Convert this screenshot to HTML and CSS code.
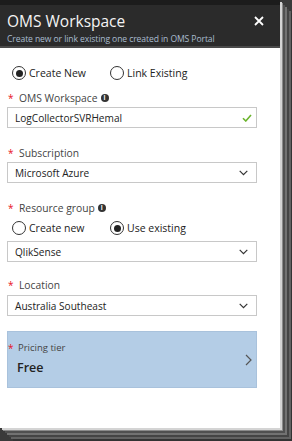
FILE: index.html
```html
<!DOCTYPE html>
<html lang="en">
<head>
  <meta charset="UTF-8" />
  <title>OMS Workspace</title>
  <link rel="stylesheet" href="styles.css">
</head>
<body>
  <div class="blade">
    <div class="header">
      <div class="titles">
        <div class="title">OMS Workspace</div>
        <div class="subtitle">Create new or link existing one created in OMS Portal</div>
      </div>
      <svg class="close" width="10" height="10" viewBox="0 0 10 10">
        <path d="M1 1L9 9M9 1L1 9" stroke="#fff" stroke-width="1.8"/>
      </svg>
    </div>

    <div class="content">
      <div class="radios first">
        <label class="radio"><span class="dot on"></span>Create New</label>
        <label class="radio"><span class="dot"></span>Link Existing</label>
      </div>

      <div class="label gap-a"><span class="req">*</span>OMS Workspace<span class="info">i</span></div>
      <div class="box">
        <span>LogCollectorSVRHemal</span>
        <svg width="10" height="8" viewBox="0 0 10 8">
          <path d="M1 4.2L3.8 7L9 1" fill="none" stroke="#6bb42d" stroke-width="1.6"/>
        </svg>
      </div>

      <div class="label gap-b"><span class="req">*</span>Subscription</div>
      <div class="box">
        <span>Microsoft Azure</span>
        <svg class="chev" width="9" height="6" viewBox="0 0 9 6">
          <path d="M0.7 0.8L4.5 4.6L8.3 0.8" fill="none" stroke="#333" stroke-width="1.2"/>
        </svg>
      </div>

      <div class="label gap-b"><span class="req">*</span>Resource group<span class="info">i</span></div>
      <div class="radios second">
        <label class="radio"><span class="dot"></span>Create new</label>
        <label class="radio"><span class="dot on"></span>Use existing</label>
      </div>
      <div class="box after-radios">
        <span>QlikSense</span>
        <svg class="chev" width="9" height="6" viewBox="0 0 9 6">
          <path d="M0.7 0.8L4.5 4.6L8.3 0.8" fill="none" stroke="#333" stroke-width="1.2"/>
        </svg>
      </div>

      <div class="label gap-c"><span class="req">*</span>Location</div>
      <div class="box">
        <span>Australia Southeast</span>
        <svg class="chev" width="9" height="6" viewBox="0 0 9 6">
          <path d="M0.7 0.8L4.5 4.6L8.3 0.8" fill="none" stroke="#333" stroke-width="1.2"/>
        </svg>
      </div>

      <div class="tier">
        <div>
          <div class="tier-label"><span class="req">*</span>Pricing tier</div>
          <div class="tier-value">Free</div>
        </div>
        <svg width="7" height="12" viewBox="0 0 7 12">
          <path d="M1 1L6 6L1 11" fill="none" stroke="#555" stroke-width="1.2"/>
        </svg>
      </div>
    </div>
  </div>
</body>
</html>
```

FILE: styles.css
```css
body {
  margin: 0;
  width: 292px;
  height: 441px;
  background: #3a3a3a;
  font-family: "Open Sans", "Noto Sans", sans-serif;
  overflow: hidden;
}
.blade {
  width: 280px;
  height: 428px;
  background: #fff;
  box-shadow:
    2px 2px 0 #d4d4d4,
    3px 3px 0 #8a8a8a,
    5px 5px 0 #505050,
    7px 7px 0 #727272,
    9px 9px 0 #444,
    11px 11px 0 #626262,
    13px 13px 0 #333;
}
.header {
  height: 41px;
  background: #2b2b2b;
  border-top: 5px solid #1c1c1c;
  border-bottom: 2px solid #4a4a4a;
  display: flex;
  justify-content: space-between;
  align-items: flex-start;
  padding: 0 16px 0 7px;
}
.title {
  color: #f4f4f4;
  font-size: 15.5px;
  line-height: 20px;
  margin-top: 6px;
}
.subtitle {
  color: #a9bccf;
  font-size: 8.6px;
  line-height: 10px;
  margin-top: 3px;
  letter-spacing: -0.1px;
}
.close {
  margin-top: 11px;
}
.content {
  padding: 0 23px 0 7px;
}
.radios {
  display: flex;
  height: 16px;
  align-items: center;
  font-size: 10.5px;
  color: #222;
}
.radios.first {
  margin-top: 17px;
}
.radios.second {
  margin-top: 5px;
}
.radio {
  display: flex;
  align-items: center;
  width: 98px;
}
.dot {
  width: 12px;
  height: 12px;
  border: 1.5px solid #333;
  border-radius: 50%;
  margin: 0 3px 0 5px;
  display: flex;
  align-items: center;
  justify-content: center;
}
.dot.on::after {
  content: "";
  width: 7px;
  height: 7px;
  border-radius: 50%;
  background: #222;
}
.label {
  height: 14px;
  line-height: 14px;
  font-size: 10.3px;
  color: #444;
  display: flex;
  align-items: center;
  margin-bottom: 2px;
}
.gap-a { margin-top: 10px; }
.gap-b { margin-top: 18px; }
.gap-c { margin-top: 16px; margin-bottom: 3px; }
.req {
  color: #e81123;
  width: 11px;
  padding-left: 1px;
  font-size: 10px;
  align-self: flex-start;
}
.info {
  width: 8px;
  height: 8px;
  border-radius: 50%;
  background: #333;
  color: #fff;
  font-size: 6.5px;
  font-weight: bold;
  line-height: 8px;
  text-align: center;
  margin-left: 3px;
}
.box {
  height: 19px;
  border: 1px solid #c8c8c8;
  display: flex;
  align-items: center;
  justify-content: space-between;
  padding: 0 4px 0 7px;
  font-size: 10.1px;
  color: #222;
}
.box.after-radios {
  margin-top: 5px;
}
.chev {
  margin-right: 4px;
}
.tier {
  margin-top: 15px;
  height: 55px;
  background: #b4cde6;
  border: 1px solid #a9c2dc;
  display: flex;
  align-items: center;
  justify-content: space-between;
  padding: 0 4px 0 0;
}
.tier-label {
  display: flex;
  font-size: 9.5px;
  color: #444;
  margin-top: -2px;
}
.tier-value {
  font-size: 12.5px;
  font-weight: 600;
  color: #222;
  padding-left: 9px;
  margin-top: 4px;
}
.tier-label .req {
  width: 10px;
  padding-left: 0;
}
```
